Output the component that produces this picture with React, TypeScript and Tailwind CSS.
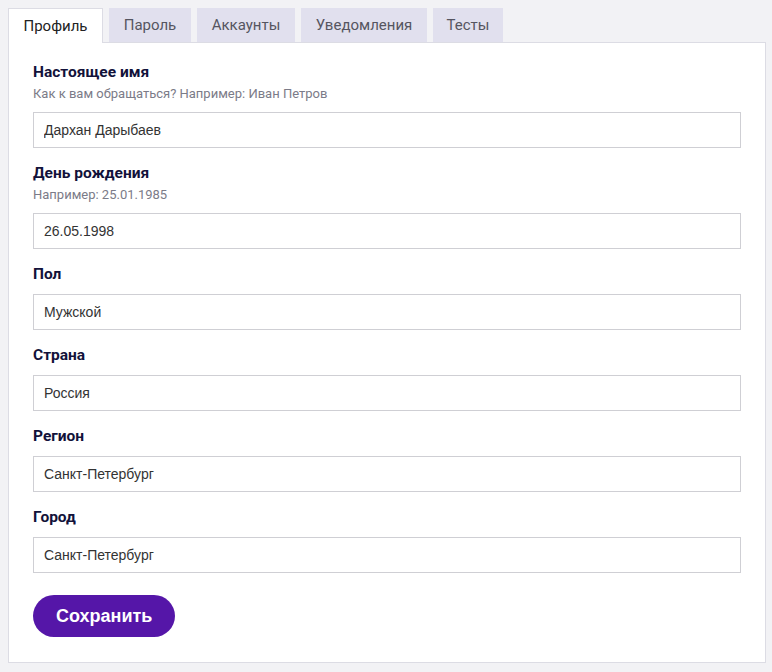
import React from "react";

const tabs: { t: string; w: string }[] = [
  { t: "Профиль", w: "w-[95px]" },
  { t: "Пароль", w: "w-[82px]" },
  { t: "Аккаунты", w: "w-[98px]" },
  { t: "Уведомления", w: "w-[126px]" },
  { t: "Тесты", w: "w-[70px]" },
];

type Field = { label: string; hint?: string; value: string };

const fields: Field[] = [
  { label: "Настоящее имя", hint: "Как к вам обращаться? Например: Иван Петров", value: "Дархан Дарыбаев" },
  { label: "День рождения", hint: "Например: 25.01.1985", value: "26.05.1998" },
  { label: "Пол", value: "Мужской" },
  { label: "Страна", value: "Россия" },
  { label: "Регион", value: "Санкт-Петербург" },
  { label: "Город", value: "Санкт-Петербург" },
];

export default function App() {
  return (
    <div className="min-h-[672px] w-[772px] bg-[#f2f2f5] p-[8px] font-['Roboto',sans-serif]">
      <div className="flex gap-[6px]">
        {tabs.map((tab, i) =>
          i === 0 ? (
            <div
              key={tab.t}
              className={`${tab.w} relative z-10 -mb-px flex h-[35px] items-center justify-center border border-b-0 border-[#dcdce4] bg-white text-[15px] text-[#222]`}
            >
              {tab.t}
            </div>
          ) : (
            <div
              key={tab.t}
              className={`${tab.w} flex h-[34px] items-center justify-center bg-[#e1e0ee] text-[15px] text-[#555560]`}
            >
              {tab.t}
            </div>
          )
        )}
      </div>
      <div className="w-[758px] border border-[#dcdce4] bg-white px-[24px] pb-[25px] pt-[19px]">
        <div className="flex flex-col gap-[15px]">
          {fields.map((f) => (
            <div key={f.label} className="flex flex-col">
              <div className="text-[15.5px] font-bold leading-[20px] text-[#12123a]">{f.label}</div>
              {f.hint && (
                <div className="mt-[3px] text-[13px] leading-[17px] text-[#7b7b88]">{f.hint}</div>
              )}
              <input
                readOnly
                value={f.value}
                className="mt-[10px] h-[36px] w-full border border-[#cfcfd4] bg-white px-[10px] font-['Liberation_Sans',Arial,sans-serif] text-[14px] text-[#333] outline-none"
              />
            </div>
          ))}
        </div>
        <button className="mt-[22px] h-[42px] rounded-full bg-[#5516a8] px-[23px] font-['Liberation_Sans',Arial,sans-serif] text-[18px] font-bold text-white">
          Сохранить
        </button>
      </div>
    </div>
  );
}
